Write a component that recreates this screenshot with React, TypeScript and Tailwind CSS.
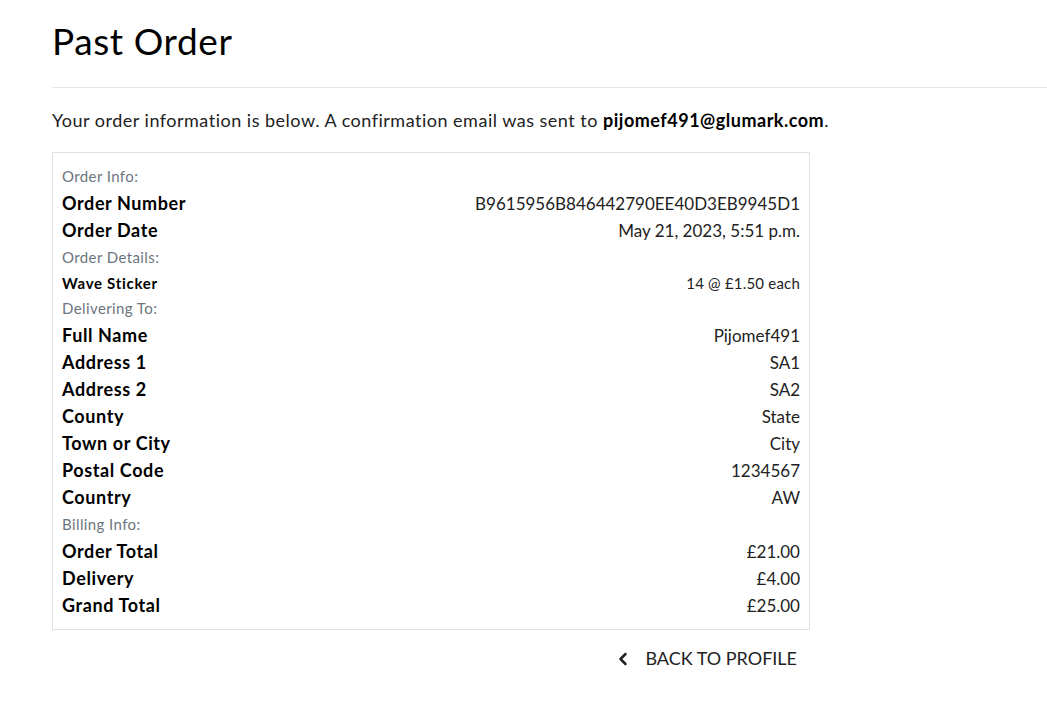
import { ChevronLeft } from "lucide-react";

type Row =
  | { kind: "head"; text: string }
  | { kind: "item"; label: string; value: string; small?: boolean };

const rows: Row[] = [
  { kind: "head", text: "Order Info:" },
  { kind: "item", label: "Order Number", value: "B9615956B846442790EE40D3EB9945D1" },
  { kind: "item", label: "Order Date", value: "May 21, 2023, 5:51 p.m." },
  { kind: "head", text: "Order Details:" },
  { kind: "item", label: "Wave Sticker", value: "14 @ £1.50 each", small: true },
  { kind: "head", text: "Delivering To:" },
  { kind: "item", label: "Full Name", value: "Pijomef491" },
  { kind: "item", label: "Address 1", value: "SA1" },
  { kind: "item", label: "Address 2", value: "SA2" },
  { kind: "item", label: "County", value: "State" },
  { kind: "item", label: "Town or City", value: "City" },
  { kind: "item", label: "Postal Code", value: "1234567" },
  { kind: "item", label: "Country", value: "AW" },
  { kind: "head", text: "Billing Info:" },
  { kind: "item", label: "Order Total", value: "£21.00" },
  { kind: "item", label: "Delivery", value: "£4.00" },
  { kind: "item", label: "Grand Total", value: "£25.00" },
];

export default function App() {
  return (
    <div className="min-h-screen bg-white font-['Lato',sans-serif] text-black">
      <div className="pl-[52px]">
        <h1 className="pt-[18px] text-[37px] leading-[46px] font-normal tracking-[0.6px]">Past Order</h1>
        <hr className="mt-[23px] border-t border-[#e5e5e5]" />
        <p className="mt-[19px] text-[18px] leading-[26px] tracking-[0.5px] text-[#222]">
          Your order information is below. A confirmation email was sent to{" "}
          <strong className="font-bold text-black">pijomef491@glumark.com</strong>.
        </p>

        {/* Order card */}
        <div className="mt-[19px] w-[758px] border border-[#dee2e6] px-[9px] py-[10px]">
          {rows.map((r, i) =>
            r.kind === "head" ? (
              <div key={i} className="h-[27px] leading-[27px] text-[15px] tracking-[0.4px] text-[#6c757d]">
                {r.text}
              </div>
            ) : r.small ? (
              <div key={i} className="flex h-[24px] items-center justify-between text-[15px]">
                <span className="font-bold tracking-[0.7px]">{r.label}</span>
                <span className="text-[#222] tracking-[0.2px]">{r.value}</span>
              </div>
            ) : (
              <div key={i} className="flex h-[27px] items-center justify-between text-[18px]">
                <span className="font-bold tracking-[0.6px]">{r.label}</span>
                <span className="text-[17px] text-[#222]">{r.value}</span>
              </div>
            )
          )}
        </div>

        <div className="flex w-[758px] justify-end pr-[13px] pt-[15px]">
          <a className="flex items-center gap-[12px] text-[18px] uppercase text-[#222]" href="#">
            <ChevronLeft className="h-5 w-5" strokeWidth={3} />
            Back to Profile
          </a>
        </div>
      </div>
    </div>
  );
}
